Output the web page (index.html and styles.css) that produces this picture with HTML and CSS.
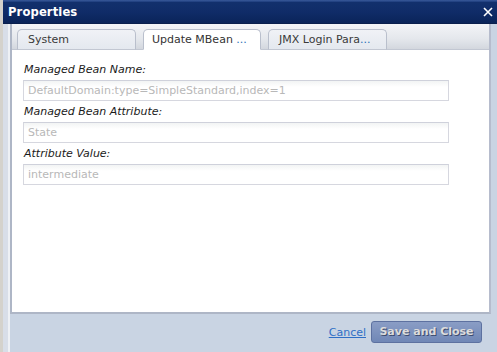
FILE: index.html
```html
<!DOCTYPE html>
<html>
<head>
<meta charset="utf-8">
<link rel="stylesheet" href="styles.css">
</head>
<body>
<div class="dialog">
  <div class="titlebar">
    <span class="title">Properties</span>
    <svg class="close" width="10" height="10" viewBox="0 0 10 10"><path d="M1 1 L9 9 M9 1 L1 9" stroke="#ffffff" stroke-width="1.6" fill="none"/></svg>
  </div>
  <div class="body">
    <div class="panel">
      <div class="tabstrip">
        <div class="tab">System</div>
        <div class="tab active">Update MBean <span class="dots">...</span></div>
        <div class="tab">JMX Login Para<span class="dots">...</span></div>
      </div>
      <div class="content">
        <div class="label">Managed Bean Name:</div>
        <div class="input">DefaultDomain:type=SimpleStandard,index=1</div>
        <div class="label">Managed Bean Attribute:</div>
        <div class="input">State</div>
        <div class="label">Attribute Value:</div>
        <div class="input">intermediate</div>
      </div>
    </div>
    <div class="footer">
      <a class="cancel" href="#">Cancel</a>
      <div class="btn">Save and Close</div>
    </div>
  </div>
</div>
</body>
</html>
```
FILE: styles.css
```css
html, body {
  margin: 0;
  padding: 0;
  width: 497px;
  height: 352px;
  overflow: hidden;
  background: #d4d2cc;
  font-family: "DejaVu Sans", Verdana, sans-serif;
}
.dialog {
  margin-left: 3px;
  width: 494px;
  height: 352px;
  display: flex;
  flex-direction: column;
  background: #c9d4e3;
}
.titlebar {
  height: 23px;
  flex: none;
  display: flex;
  align-items: center;
  justify-content: space-between;
  padding: 0 4px 0 5px;
  background: linear-gradient(#3a5a9a 0px, #1d3c7c 2px, #14327020 2px, #102c68 12px, #0a2459 23px);
  background-color: #12306c;
  border-bottom: 1px solid #0a1f4d;
}
.title {
  color: #ffffff;
  font-weight: bold;
  font-size: 11.6px;
  letter-spacing: 0.1px;
  margin-top: 1px;
}
.close {
  margin-right: 0;
  margin-top: 1px;
}
.body {
  flex: 1;
  display: flex;
  flex-direction: column;
  padding: 0 0 0 7px;
  background: linear-gradient(90deg, #d8dee8 0px, #d8dee8 5px, #eef1f5 5px, #eef1f5 7px, #c9d4e3 7px);
}
.panel {
  width: 481px;
  height: 290px;
  display: flex;
  flex-direction: column;
  border-right: 2px solid #b6bccd;
  border-bottom: 2px solid #aeb6c6;
  border-left: 2px solid #aeb6c6;
  box-sizing: border-box;
  background: #ffffff;
}
.tabstrip {
  height: 26px;
  flex: none;
  display: flex;
  align-items: flex-end;
  gap: 7px;
  padding-left: 5px;
  background: linear-gradient(#f3f4f7, #e4e7ec 60%, #d3d7de);
  border-bottom: 1px solid #c2c7d2;
  box-sizing: border-box;
}
.tab {
  width: 119px;
  height: 21px;
  box-sizing: border-box;
  margin-bottom: -1px;
  border: 1px solid #b9bfcc;
  border-bottom: 1px solid #c2c7d2;
  border-radius: 5px 5px 0 0;
  background: linear-gradient(#f0f2f6, #e4e8ef);
  color: #3a3a3a;
  font-size: 11px;
  line-height: 20px;
  padding-left: 10px;
  white-space: nowrap;
}
.tab.active {
  width: 118px;
  background: #ffffff;
  border-bottom-color: #ffffff;
  padding-left: 8px;
  color: #333333;
}
.dots {
  color: #2a72b8;
}
.content {
  flex: 1;
  padding: 13px 0 0 11px;
}
.label {
  font-style: italic;
  font-size: 11px;
  line-height: 14px;
  color: #1a1a1a;
  margin: 4px 0 3px 1px;
}
.label:first-child {
  margin-top: 0;
}
.input {
  width: 426px;
  height: 21px;
  box-sizing: border-box;
  border: 1px solid #d6d7df;
  border-top-color: #cfd1db;
  background: linear-gradient(#f2f4f4, #ffffff 6px);
  color: #b8b8b8;
  font-size: 11px;
  line-height: 19px;
  padding-left: 4px;
}
.footer {
  flex: 1;
  display: flex;
  align-items: flex-start;
  justify-content: flex-end;
  padding: 7px 15px 0 0;
  gap: 5px;
}
.cancel {
  font-size: 11px;
  color: #2f6fc6;
  text-decoration: underline;
  margin-top: 5px;
}
.btn {
  width: 111px;
  height: 22px;
  box-sizing: border-box;
  border: 1px solid #5d71a0;
  border-radius: 3px;
  background: linear-gradient(#8a9dc5, #7087b6);
  color: #dcdcdc;
  font-weight: bold;
  font-size: 11px;
  line-height: 20px;
  text-align: center;
  text-shadow: 1px 1px 0 #3e4d70;
}
```
